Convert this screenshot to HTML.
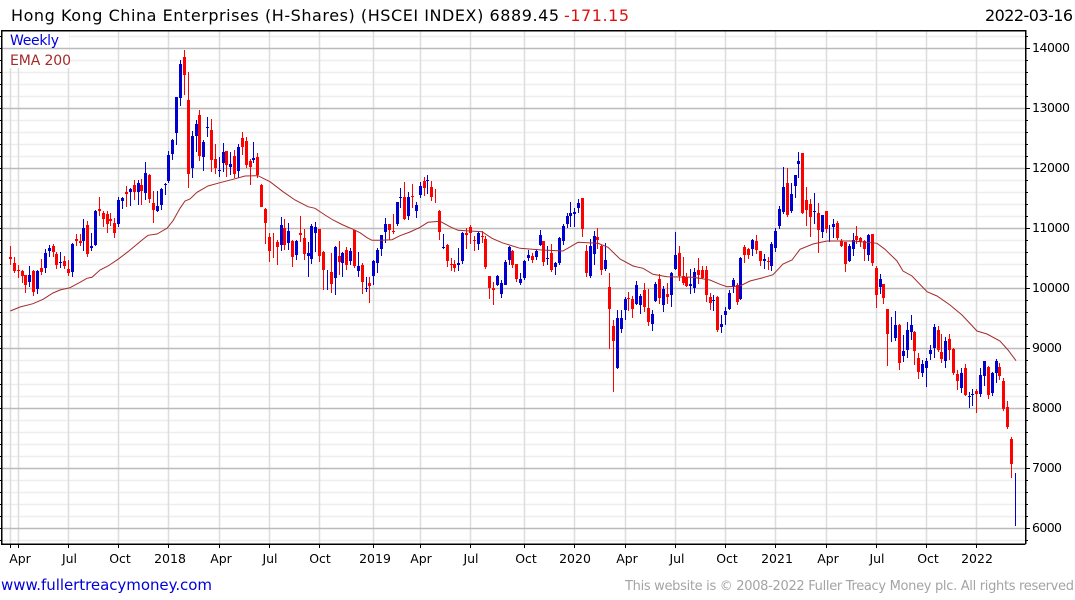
<!DOCTYPE html>
<html><head><meta charset="utf-8"><style>
html,body{margin:0;padding:0;background:#fff;width:1075px;height:600px;overflow:hidden}
svg{display:block}
text{font-family:"DejaVu Sans","Liberation Sans",sans-serif}
</style></head><body>
<svg id="s" width="1075" height="600" viewBox="0 0 1075 600" xmlns="http://www.w3.org/2000/svg">
<g id="grid"></g>
<rect x="2" y="31" width="67" height="37" fill="#fff"/>
<path d="M2 48.5H69" stroke="#bbb" stroke-width="1.4"/>
<g id="c" shape-rendering="crispEdges"></g>
<polyline fill="none" stroke="#a52a2a" stroke-width="1" points="10.3,311 20,307 33,303.7 43,299.3 53,293 60,290 70,287.7 80,282.3 87,278.3 92,277.3 100,270 108,266 118,259.3 128,251.7 143,239.3 148,235.3 157,234 167,228.3 173,220.7 180,208.3 185,201 190,199 197,192.3 208,186 220,182.7 233,179.3 245,176 258,175.7 270,181.7 283,191.7 295,200 308,206.7 315,208.3 325,215 333,220 343,225 353,229.3 360,232.7 367,237.7 372,240.3 380,240.3 392,239.7 400,235.7 410,232 420,227.3 428,222.3 440,221.3 450,226.7 458,230.3 482,231.7 492,238.3 502,242.7 520,248.3 542,250 563,251 578,242.3 598,243.3 608,247.3 620,259 633,266 643,268.3 653,274.3 667,276.7 693,277.3 710,280 720,284.3 727,286.7 740,286 750,281 763,277.7 773,274.7 783,264 792,260 800,249.3 813,244 827,241 853,241 877,243.3 885,249.3 897,261 903,271 912,276 927,291.7 937,296 950,305 962,315 977,331 987,334 1000,341 1008,350 1016,360.7"/>
<g shape-rendering="crispEdges" fill="none" stroke="#000" stroke-width="1.5">
<path d="M1.5 30.5H1025.5V544M1.5 30V544H1025.5"/>
</g>
<g id="ticks" shape-rendering="crispEdges" stroke="#000"></g>

<text x="11" y="21" font-size="16" fill="#000" textLength="548" lengthAdjust="spacing">Hong Kong China Enterprises (H-Shares) (HSCEI INDEX) 6889.45</text>
<text x="564" y="21" font-size="16" fill="#e01010" textLength="65" lengthAdjust="spacing">-171.15</text>
<text x="985" y="21" font-size="16" fill="#000" textLength="88" lengthAdjust="spacing">2022-03-16</text>
<text x="10" y="45" font-size="14" fill="#0000dd" textLength="49" lengthAdjust="spacing">Weekly</text>
<text x="10" y="65" font-size="14" fill="#a52a2a" textLength="61" lengthAdjust="spacing">EMA 200</text>

<g font-size="12.5" fill="#000">
<text x="1032" y="52" textLength="38">14000</text>
<text x="1032" y="112" textLength="38">13000</text>
<text x="1032" y="172" textLength="38">12000</text>
<text x="1032" y="232" textLength="38">11000</text>
<text x="1032" y="292" textLength="38">10000</text>
<text x="1032" y="352" textLength="30">9000</text>
<text x="1032" y="412" textLength="30">8000</text>
<text x="1032" y="472" textLength="30">7000</text>
<text x="1032" y="532" textLength="30">6000</text>
</g>
<g font-size="12.5" fill="#000" text-anchor="middle">
<text x="20" y="563">Apr</text>
<text x="69.5" y="563">Jul</text>
<text x="120" y="563">Oct</text>
<text x="170" y="563">2018</text>
<text x="221" y="563">Apr</text>
<text x="270" y="563">Jul</text>
<text x="320" y="563">Oct</text>
<text x="375" y="563">2019</text>
<text x="421" y="563">Apr</text>
<text x="471" y="563">Jul</text>
<text x="526" y="563">Oct</text>
<text x="575" y="563">2020</text>
<text x="627" y="563">Apr</text>
<text x="677" y="563">Jul</text>
<text x="727" y="563">Oct</text>
<text x="777" y="563">2021</text>
<text x="828" y="563">Apr</text>
<text x="877" y="563">Jul</text>
<text x="928" y="563">Oct</text>
<text x="977" y="563">2022</text>
</g>
<text x="1" y="590" font-size="15" fill="#0000dd" textLength="211" lengthAdjust="spacing">www.fullertreacymoney.com</text>
<text x="625" y="590" font-size="13" fill="#a4a4a4" textLength="449" lengthAdjust="spacing">This website is © 2008-2022 Fuller Treacy Money plc. All rights reserved</text>
</svg>
<script>
(function(){
var vx=[10,18,68,118,168,219,269,319,373,420,470,524,574,625,675,725,775,826,876,926,976];
var g='',t='';
for(var y=540;y>=36;y-=12){
  var maj=((528-y)%60===0);
  if(!maj)g+='<path d="M2 '+(y+.5)+'H1025" stroke="#eee" stroke-width="1.5"/>';
  t+='<path d="M1026 '+(y+.5)+'H'+(maj?1030:1028)+'"/><path d="M0 '+(y+.5)+'H2"/>';
}
vx.forEach(function(x){
  var top=(x===10||x===18)?68:31;
  g+='<path d="M'+(x+.5)+' '+top+'V544" stroke="#ddd" stroke-width="1.5"/>';
  t+='<path d="M'+(x+.5)+' 544V548"/>';
});
for(var y=48;y<=528;y+=60){
  g+='<path d="M2 '+(y+.5)+'H1025" stroke="#bbb" stroke-width="1.4"/>';
}
document.getElementById('grid').innerHTML=g;
document.getElementById('ticks').innerHTML=t;
var d="r246,265,257,259;r257,273,263,271;r265,278,270,271;r270,283,271,276;r275,293,275,285;b266,287,275,282;r270,296,271,292;b270,294,271,289;r259,275,268,272;b249,273,253,268;b245,257,248,251;r244,257,246,252;r252,269,254,265;b252,268,262,263;r256,269,261,266;r260,276,269,273;b243,277,244,272;r234,246,239,241;r234,246,241,243;b219,251,228,241;r221,257,225,254;b233,251,246,248;b210,246,211,245;r197,216,209,211;r211,227,213,219;r211,233,214,224;r213,226,219,221;r218,238,223,233;b197,227,200,224;b197,209,198,201;r186,207,192,194;b188,206,189,192;r180,200,185,192;b180,205,183,192;r179,205,185,191;b162,200,173,193;r174,203,175,199;r191,223,203,210;b191,212,206,211;b188,210,189,205;b183,195,184,185;b151,183,155,181;b139,160,140,154;b97,145,97,133;b60,106,64,98;r50,95,57,75;r72,188,100,174;b131,178,136,168;b120,152,124,136;r110,161,115,156;b140,171,142,157;b117,137,127,128;r119,172,130,160;r144,174,159,168;b157,177,170,171;b143,172,152,163;r151,177,151,165;b152,175,164,167;r150,178,156,174;b144,178,147,171;r132,155,138,147;r137,168,141,165;r159,185,161,167;b142,163,158,160;r153,178,157,175;r184,207,185,207;r208,244,209,223;r233,262,237,251;r233,258,0,0;r240,265,242,247;b217,251,225,245;r219,250,228,245;b223,250,231,243;r240,267,241,257;b240,260,241,255;r216,242,233,235;r229,260,238,254;b242,277,253,256;b224,264,226,259;b222,252,227,233;r229,262,229,256;r251,290,252,270;b270,290,0,0;r253,293,272,284;b246,295,247,278;r241,275,256,262;b252,277,253,263;r247,270,250,265;b248,265,251,261;r230,268,230,266;b252,277,266,271;r263,294,265,282;b277,292,288,289;r277,303,283,286;b260,285,261,276;b248,273,250,263;b235,256,235,249;b218,243,224,232;r224,240,224,230;r214,234,231,232;b202,226,202,224;b188,208,197,198;r182,220,197,219;b192,220,197,216;r184,208,196,197;b202,218,205,211;b182,198,186,195;r177,196,181,188;b175,194,180,181;r181,201,187,197;r189,203,0,0;r210,240,211,232;b234,249,247,248;r244,267,245,261;r258,271,264,265;r260,272,264,268;b248,271,263,265;b232,264,233,261;r228,249,233,235;r225,244,227,233;r236,251,240,241;b231,250,233,244;r231,243,236,237;r236,269,239,267;r276,299,276,288;r282,305,288,290;b275,286,276,285;b280,298,283,294;b260,285,262,285;b246,265,247,260;r250,268,251,265;r264,282,264,279;b273,285,279,283;b260,280,261,278;b250,261,255,258;r253,263,256,260;b249,260,251,257;b230,246,235,245;r241,266,241,262;b246,265,258,259;r244,272,253,270;b262,275,263,267;b237,265,238,263;b224,245,226,241;b213,228,216,224;b202,227,213,216;b208,227,212,214;b199,213,203,208;r198,237,198,229;r245,277,251,273;b239,278,246,276;b231,265,236,254;r228,249,237,240;r245,275,246,270;b243,271,260,269;r273,349,287,309;r320,392,326,341;b310,369,318,368;b310,333,318,329;b297,320,299,310;r292,311,298,299;r296,318,299,309;b281,305,285,304;b294,314,296,305;r283,312,290,307;r289,326,308,322;b310,331,314,324;b282,302,284,301;r274,304,279,298;b286,312,289,305;r283,304,294,297;b272,307,273,295;b232,270,255,269;r246,281,253,276;r257,285,276,283;r273,287,277,286;b269,294,284,286;b268,293,272,288;r258,284,270,275;r266,279,270,278;r266,302,270,295;r293,310,297,303;b295,311,300,301;r296,332,297,330;b315,333,324,327;b307,325,311,315;b290,310,293,309;b278,293,280,287;r283,305,285,302;b257,300,258,299;r245,263,247,255;r248,259,249,255;b239,256,240,249;r235,254,241,250;r251,266,251,261;b254,269,259,261;r257,270,261,262;b242,271,244,266;b228,252,231,248;b206,229,209,226;b167,214,187,212;r168,217,183,215;b183,213,194,211;b175,198,175,186;b152,178,161,164;r153,214,153,213;r187,226,200,210;r199,237,204,217;b193,224,211,212;r203,253,213,230;b215,238,215,232;r211,233,211,229;b225,242,0,0;b219,238,224,227;r221,240,223,238;r239,247,241,246;r242,272,242,264;b244,262,246,261;b233,256,240,249;r226,244,236,240;r237,247,238,242;r240,261,241,249;b234,261,235,255;r234,266,234,263;r266,308,268,295;b274,294,279,287;r284,304,284,298;r309,366,309,334;b317,342,0,0;b311,341,325,338;r324,370,325,363;b335,362,351,356;b322,358,330,350;b315,340,325,332;r331,365,332,351;r353,379,358,372;b360,377,364,373;b358,387,361,368;b345,360,350,354;b324,358,327,348;r326,352,330,350;r334,363,352,359;b337,368,341,361;r334,360,339,350;r348,375,349,373;r370,390,374,381;b368,393,373,388;r364,396,368,395;b392,408,396,397;b389,406,394,395;r389,413,391,394;b368,397,375,394;b361,386,361,376;r366,399,367,395;b372,396,373,393;b359,383,361,373;r363,380,367,376;r378,411,381,409;r401,429,407,427;r437,478,439,464;b473,526,0,0";
var out='',col={r:'#ff0000',b:'#0000d0'};
d.split(';').forEach(function(s,i){
  var c=s[0],a=s.slice(1).split(',').map(Number),x=Math.round(10+i*3.865);
  out+='<rect x="'+x+'" y="'+a[0]+'" width="1" height="'+(a[1]-a[0])+'" fill="'+col[c]+'"/>';
  if(a[2]) out+='<rect x="'+(x-1)+'" y="'+a[2]+'" width="3" height="'+Math.max(1,a[3]-a[2])+'" fill="'+col[c]+'"/>';
});
document.getElementById('c').innerHTML=out;
})();
</script>
</body></html>
